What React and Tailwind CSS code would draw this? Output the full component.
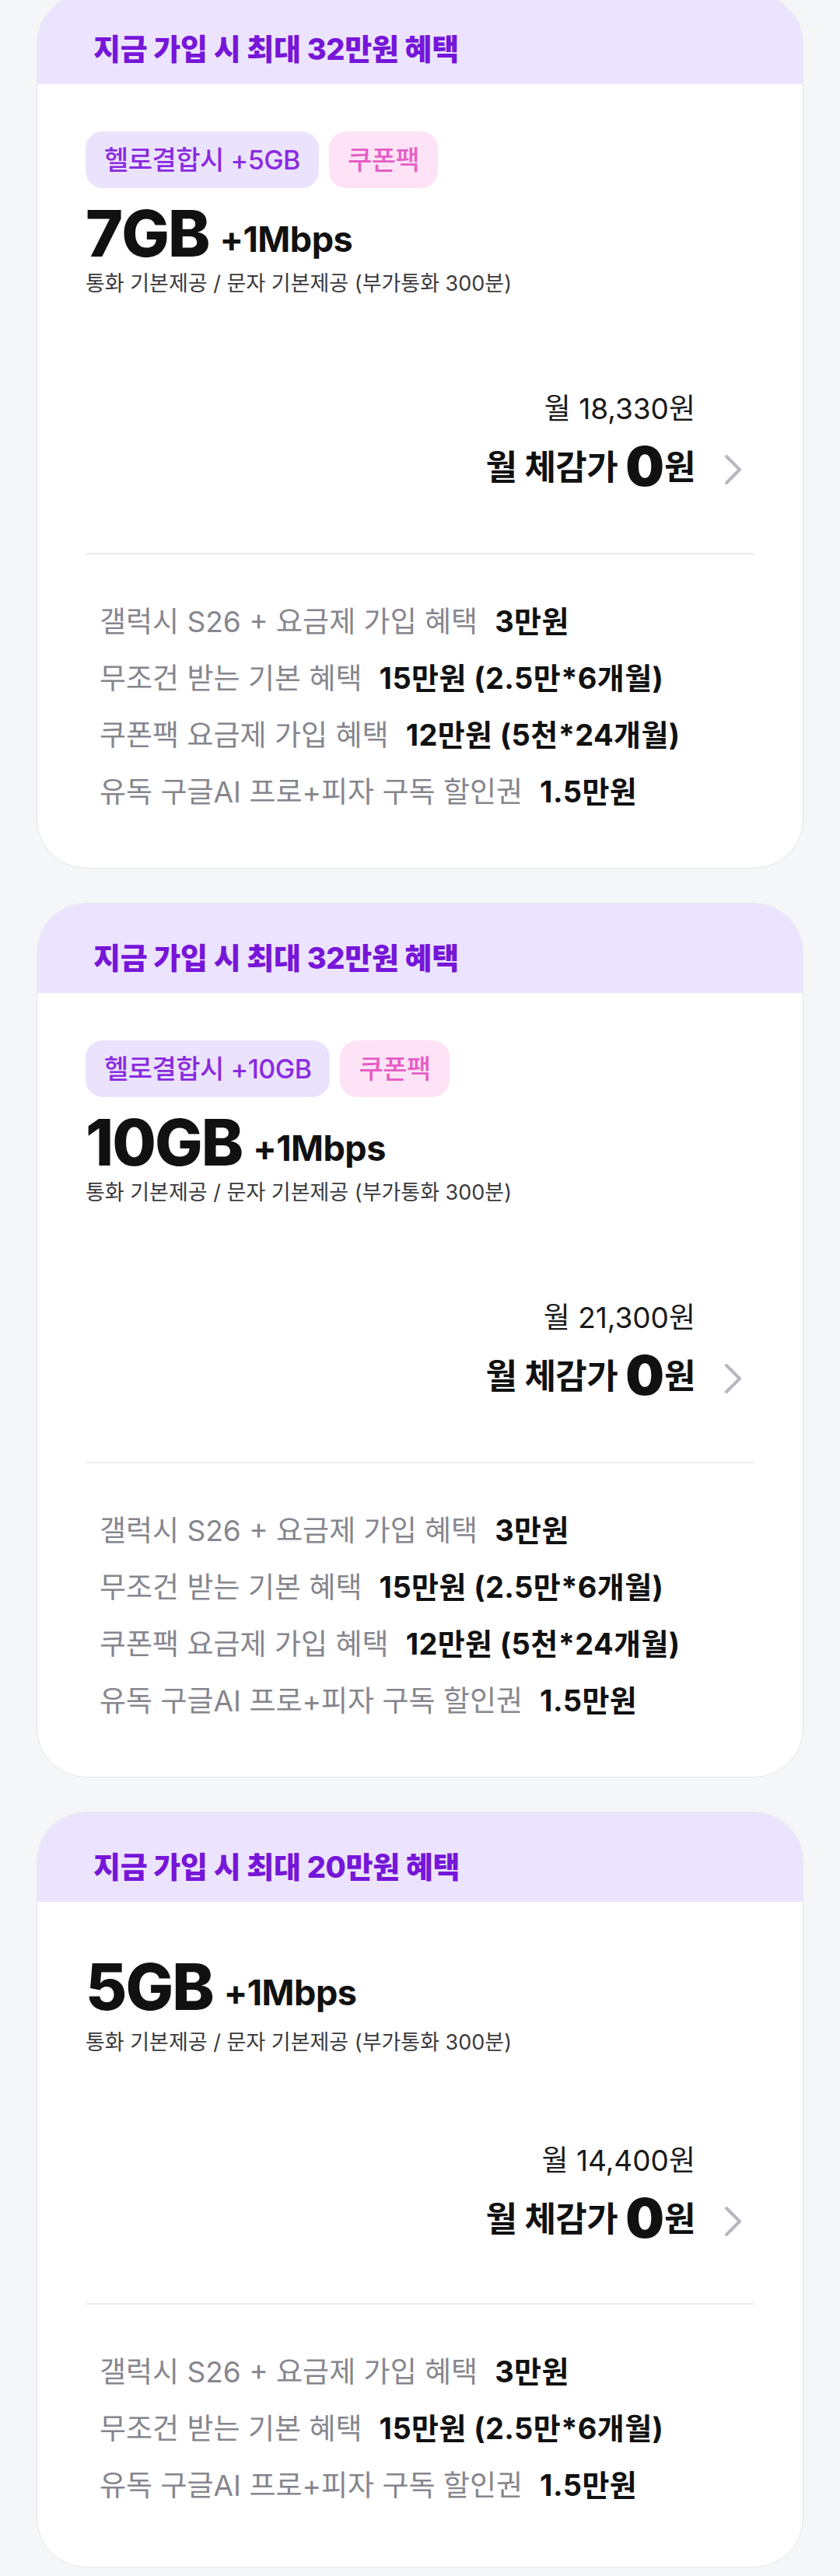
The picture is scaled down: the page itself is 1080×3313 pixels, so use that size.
import React from 'react';

const plans = [
    {
        promo: '지금 가입 시 최대 32만원 혜택',
        badges: ['헬로결합시 +5GB', '쿠폰팩'],
        data: '7GB',
        price: '18,330',
        benefits: [
            ['갤럭시 S26 + 요금제 가입 혜택', '3만원'],
            ['무조건 받는 기본 혜택', '15만원 (2.5만*6개월)'],
            ['쿠폰팩 요금제 가입 혜택', '12만원 (5천*24개월)'],
            ['유독 구글AI 프로+피자 구독 할인권', '1.5만원'],
        ],
    },
    {
        promo: '지금 가입 시 최대 32만원 혜택',
        badges: ['헬로결합시 +10GB', '쿠폰팩'],
        data: '10GB',
        price: '21,300',
        benefits: [
            ['갤럭시 S26 + 요금제 가입 혜택', '3만원'],
            ['무조건 받는 기본 혜택', '15만원 (2.5만*6개월)'],
            ['쿠폰팩 요금제 가입 혜택', '12만원 (5천*24개월)'],
            ['유독 구글AI 프로+피자 구독 할인권', '1.5만원'],
        ],
    },
    {
        promo: '지금 가입 시 최대 20만원 혜택',
        badges: [],
        data: '5GB',
        price: '14,400',
        benefits: [
            ['갤럭시 S26 + 요금제 가입 혜택', '3만원'],
            ['무조건 받는 기본 혜택', '15만원 (2.5만*6개월)'],
            ['유독 구글AI 프로+피자 구독 할인권', '1.5만원'],
        ],
    },
];

function Chevron() {
    return (
        <svg width="23" height="40" viewBox="0 0 23 40" fill="none" className="ml-[37px] mt-[6px] shrink-0">
            <polyline points="3,3 20,20 3,37" stroke="#b7b7be" strokeWidth="4" strokeLinecap="round" strokeLinejoin="round" />
        </svg>
    );
}

function PlanCard({ plan }) {
    const hasBadges = plan.badges.length > 0;

    return (
        <div className="bg-white rounded-[64px] border border-[#e6e6ea] overflow-hidden">
            {/* promo header */}
            <div className="h-[115px] bg-[#ece4fe] pl-[72px] pt-[24px] flex items-center">
                <p className="text-[38px] font-extrabold text-[#7616d8] tracking-[-0.3px] leading-none">{plan.promo}</p>
            </div>

            <div className={`px-[62px] ${hasBadges ? 'pb-[61px]' : 'pb-[68px]'}`}>
                {hasBadges && (
                    <div className="flex gap-[13px] pt-[61px]">
                        <span className="h-[73px] px-[24px] rounded-[22px] bg-[#ebe3fd] text-[#8a2be0] text-[34px] font-medium flex items-center tracking-[-0.5px]">
                            {plan.badges[0]}
                        </span>
                        <span className="h-[73px] px-[24px] rounded-[22px] bg-[#fde3f5] text-[#e65ec6] text-[34px] font-medium flex items-center tracking-[-0.5px]">
                            {plan.badges[1]}
                        </span>
                    </div>
                )}

                {/* data amount */}
                <div className={`flex items-end ${hasBadges ? 'mt-[18px]' : 'pt-[69px]'}`}>
                    <span className="text-[82px] font-extrabold leading-none tracking-[-2px] text-[#111]">{plan.data}</span>
                    <span className="ml-[14px] mb-[12px] text-[45px] font-bold leading-none tracking-[-0.5px] text-[#111]">+1Mbps</span>
                </div>
                <p className={`text-[27px] leading-[36px] text-[#3a3a3d] ${hasBadges ? 'mt-[5px]' : 'mt-[12px]'}`}>
                    통화 기본제공 / 문자 기본제공 (부가통화 300분)
                </p>

                {/* price */}
                <div className={`flex flex-col items-end pr-[16px] ${hasBadges ? 'mt-[121px]' : 'mt-[112px]'}`}>
                    <p className="pr-[60px] text-[37px] leading-[44px] text-[#1a1a1a]">월 {plan.price}원</p>
                    <div className="mt-[25px] flex items-center">
                        <p className="text-[44px] leading-[56px] font-bold text-[#111] tracking-[-0.5px]">
                            월 체감가{' '}
                            <span className="text-[70px] font-black leading-[0] align-[-8px] tracking-normal">0</span>
                            원
                        </p>
                        <Chevron />
                    </div>
                </div>

                <div className={`h-[2px] bg-[#ececef] ${hasBadges ? 'mt-[82px]' : 'mt-[80px]'}`} />

                {/* benefits */}
                <ul className="mt-[50px] pl-[18px]">
                    {plan.benefits.map(([label, value], i) => (
                        <li key={i} className="text-[37px] leading-[73px] whitespace-nowrap">
                            <span className="text-[#86868e]">{label}</span>
                            <span className="ml-[22px] text-[38px] font-bold text-[#111] tracking-[0.4px]">{value}</span>
                        </li>
                    ))}
                </ul>
            </div>
        </div>
    );
}

export default function App() {
    return (
        <div className="min-h-[3313px] bg-[#f5f6f8] font-['Inter','Noto_Sans_CJK_KR',sans-serif] overflow-hidden">
            <div className="-mt-[8px] px-[47px] flex flex-col gap-[44px] pb-[12px]">
                {plans.map((plan, i) => (
                    <PlanCard key={i} plan={plan} />
                ))}
            </div>
        </div>
    );
}
